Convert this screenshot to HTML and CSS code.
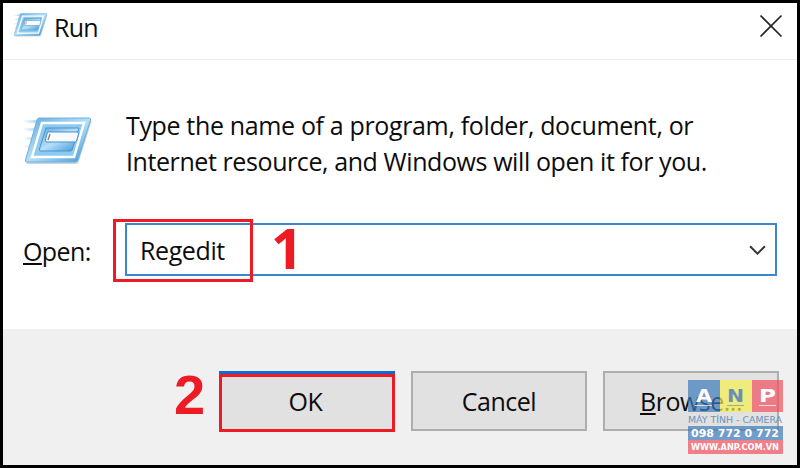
FILE: index.html
```html
<!DOCTYPE html>
<html lang="en">
<head>
    <meta charset="UTF-8">
    <title>Run</title>
    <link rel="stylesheet" href="styles.css">
</head>
<body>
    <svg width="0" height="0" class="defs">
        <defs>
            <linearGradient id="blue" x1="0" y1="0" x2="1" y2="1">
                <stop offset="0" stop-color="#5fa8de"/>
                <stop offset="0.5" stop-color="#b5e0f8"/>
                <stop offset="1" stop-color="#3d93d8"/>
            </linearGradient>
            <linearGradient id="trail" x1="0" x2="1">
                <stop offset="0" stop-color="#9fd3f3" stop-opacity="0"/>
                <stop offset="1" stop-color="#85c3ec"/>
            </linearGradient>
            <symbol id="run-icon" viewBox="0 0 70 50">
                <path d="M1 3h18v3H1zM1 11h16v3H1zM0 20h14v3H0zM0 28h12v3H0z" fill="url(#trail)"/>
                <path d="M17 3h50q2 0 1.500 2L56 44q-.5 3-3 3H5q-2 0-1.500-2L15 5q.5-2 2-2z" fill="#9aa9b5" opacity=".5"/>
                <path d="M16 1h50q2 0 1.500 2L55 43q-.8 2-3 2H4q-2 0-1.500-2L14 3q.5-2 2-2z" fill="url(#blue)" stroke="#6fb0dd"/>
                <path d="M19 6h42L51 40H9z" fill="#8ccaf0" stroke="#fff" stroke-width="2.500"/>
                <path d="M23 11h33l-7 22q-.5 1-2 1H18q-2 0-1.500-2z" fill="url(#blue)" stroke="#4a94cd" stroke-width="1"/>
                <path d="M25 15h29q2 0 1.500 2l-2 7q-.5 1-2 1H24q-2 0-1.500-2l1.500-6q.5-2 1-2z" fill="#f8fbff" stroke="#4b8fc6" stroke-width="1"/>
                <path d="M27 17l-2 6" stroke="#888" stroke-width="1.500"/>
            </symbol>
        </defs>
    </svg>
    <div class="window">
        <div class="title-bar">
            <svg class="title-icon"><use href="#run-icon"/></svg>
            <h1>Run</h1>
            <svg class="close" viewBox="0 0 24 24"><path d="M1.500 1.500l21 21M22.500 1.500l-21 21"/></svg>
        </div>
        <div class="content">
            <div class="message">
                <svg class="run-icon"><use href="#run-icon"/></svg>
                <p><span class="line-one">Type the name of a program, folder, document, or</span><br><span class="line-two">Internet resource, and Windows will open it for you.</span></p>
            </div>
            <div class="open-row">
                <label><u>O</u>pen:</label>
                <div class="combo">
                    <span>Regedit</span>
                    <svg class="arrow" viewBox="0 0 16 10"><path d="M1 1l7 7 7-7"/></svg>
                    <div class="mark"></div>
                    <b class="step step-one">1</b>
                </div>
            </div>
        </div>
        <div class="footer">
            <div class="btn ok">OK<b class="step step-two">2</b></div>
            <div class="btn cancel">Cancel</div>
            <div class="btn browse"><u>B</u>rowse...</div>
            <svg class="logo" viewBox="0 0 95 74">
                <g opacity=".7">
                    <path d="M0 0h32v32H0zM0 46h95v14H0z" fill="#3d7bbb"/>
                    <path d="M32 0h32v32H32z" fill="#f5f152"/>
                    <path d="M64 0h31v32H64zM0 60h95v14H0z" fill="#f15060"/>
                </g>
                <g class="logo-letters">
                    <text x="8" y="22" textLength="16" lengthAdjust="spacingAndGlyphs" fill="#fff">A</text>
                    <text x="39" y="22" textLength="17" lengthAdjust="spacingAndGlyphs" fill="#6890b5">N</text>
                    <text x="71" y="22" textLength="17" lengthAdjust="spacingAndGlyphs" fill="#fff">P</text>
                </g>
                <path d="M7 25.500h17M71 25.500h17" stroke="#fff" opacity=".7"/>
                <path d="M39 25.500h17" stroke="#9aae8c"/>
                <g class="logo-text">
                    <text class="tagline" x="0" y="43" textLength="94" lengthAdjust="spacingAndGlyphs">MÁY TÍNH - CAMERA</text>
                    <text class="phone" x="3" y="57" textLength="88" lengthAdjust="spacingAndGlyphs">098 772 0 772</text>
                    <text class="site" x="3" y="70" textLength="88" lengthAdjust="spacingAndGlyphs">WWW.ANP.COM.VN</text>
                </g>
            </svg>
        </div>
    </div>
</body>
</html>
```

FILE: styles.css
```css
* {
    box-sizing: border-box;
    margin: 0;
    padding: 0;
}
body {
    height: 468px;
    overflow: hidden;
    background-color: #000;
    color: #0c0c0c;
    font: 25px/36px "Open Sans", "Noto Sans", sans-serif;
}
.defs {
    position: absolute;
}
.window {
    width: 794px;
    height: 462px;
    margin: 3px;
    background-color: #fff;
}
.title-bar {
    display: flex;
    height: 57px;
    padding: 0 14px 0 10px;
    border-bottom: 1px solid #ededed;
}
.title-icon {
    width: 35px;
    height: 25px;
    margin-top: 10px;
}
.title-bar h1 {
    margin: 6px auto 0 6px;
    font-size: 25px;
    font-weight: normal;
    letter-spacing: -0.7px;
}
.close {
    width: 24px;
    height: 24px;
    margin-top: 11px;
    fill: none;
    stroke: #222;
    stroke-width: 1.7;
}
.content {
    height: 269px;
    padding: 47px 20px 0;
}
.message {
    display: flex;
    height: 116px;
}
.run-icon {
    width: 70px;
    height: 50px;
    margin: 10px 33px 0 0;
}
.message p {
    white-space: nowrap;
}
.line-one {
    letter-spacing: -0.35px;
}
.line-two {
    letter-spacing: -0.41px;
}
.open-row {
    display: flex;
    align-items: center;
}
.open-row label {
    width: 102px;
    padding-top: 2px;
    letter-spacing: -0.6px;
}
u {
    text-decoration-thickness: 2px;
    text-underline-offset: 2px;
}
.combo {
    display: flex;
    position: relative;
    flex: 1;
    align-items: center;
    justify-content: space-between;
    height: 53px;
    padding: 0 9px 0 13px;
    border: 2px solid #3a87cf;
    letter-spacing: -0.4px;
}
.arrow {
    width: 17px;
    height: 11px;
    margin-top: 2px;
    fill: none;
    stroke: #333;
    stroke-width: 1.8;
}
.mark {
    position: absolute;
    top: -6px;
    left: -14px;
    width: 140px;
    height: 63px;
    border: 3px solid #ed1c24;
}
.step {
    position: absolute;
    color: #ed1c24;
    font: bold 56px/56px "Liberation Sans", Arial, sans-serif;
    letter-spacing: 0;
}
.step-one {
    top: -6px;
    left: 144px;
    font-family: "Open Sans", sans-serif;
}
.step-two {
    top: -10px;
    left: -48px;
}
.footer {
    display: flex;
    position: relative;
    gap: 16px;
    height: 136px;
    padding: 42px 0 0 216px;
    background-color: #f0f0f0;
}
.btn {
    position: relative;
    width: 176px;
    height: 60px;
    border: 2px solid #adadad;
    background-color: #e1e1e1;
    line-height: 56px;
    text-align: center;
    letter-spacing: -0.5px;
}
.ok {
    height: 58px;
    margin-top: 3px;
    padding-right: 3px;
    border: 3px solid #ed1c24;
    box-shadow: 0 -3px #1769cf;
    line-height: 49px;
}
.logo {
    position: absolute;
    top: 51px;
    left: 685px;
    width: 95px;
    height: 74px;
}
.logo-letters {
    font: bold 18px "DejaVu Sans", sans-serif;
}
.logo-text {
    font-family: "DejaVu Sans", sans-serif;
    font-weight: bold;
}
.tagline {
    fill: #6d94ba;
    font-size: 8.5px;
    font-weight: normal;
}
.phone {
    fill: #fff;
    font-size: 11px;
}
.site {
    fill: #fff;
    font-size: 8.5px;
}
```
